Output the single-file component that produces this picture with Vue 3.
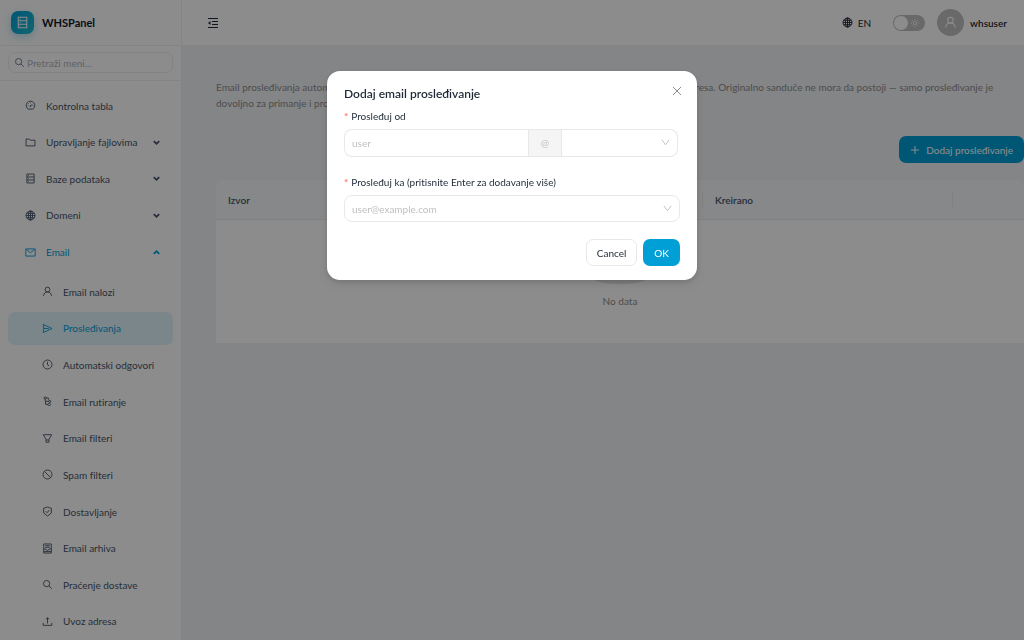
<script setup>
import { ref } from 'vue'

const search = ref('')
const dark = ref(false)
const source = ref('')
const domain = ref('')
const target = ref('')

const icons = {
  dashboard: '<path d="M300 846A400 400 0 1 1 724 846Z"/><path d="M512 570L650 410M512 240v60M260 520h60M704 520h60M330 330l40 40"/><circle cx="512" cy="570" r="40"/>',
  folder: '<path d="M96 190h300l110 110h422v530H96z"/>',
  database: '<path d="M176 96h672v832H176zM176 370h672M176 650h672"/><path d="M300 235h60M300 510h60M300 790h60"/>',
  globe: '<circle cx="512" cy="512" r="420"/><ellipse cx="512" cy="512" rx="190" ry="420"/><path d="M512 92v840M92 512h840M150 310h724M150 714h724"/>',
  mail: '<path d="M76 180h872v664H76z"/><path d="M130 230l382 300 382-300"/>',
  user: '<circle cx="512" cy="330" r="220"/><path d="M140 920c10-220 170-370 372-370s362 150 372 370"/>',
  send: '<path d="M110 130L930 512 110 894l60-382z"/><path d="M170 512h460"/>',
  clock: '<circle cx="512" cy="512" r="420"/><path d="M512 260v280l160 110"/>',
  route: '<circle cx="300" cy="190" r="110"/><path d="M410 190h190v150M300 300v190h330"/><path d="M330 490v290h200"/><circle cx="720" cy="500" r="100"/><rect x="530" y="700" width="260" height="180" rx="80"/>',
  filter: '<path d="M120 160h784L650 590v270H374V590z"/><path d="M374 650h276"/>',
  stop: '<circle cx="512" cy="512" r="420"/><path d="M220 220l584 584"/>',
  shield: '<path d="M512 90l360 120v440L512 930 152 650V210z"/><path d="M340 490l130 130 220-250"/>',
  archive: '<path d="M160 90h704v844H160z"/><path d="M300 250h424M300 400h424M160 560h200c20 180 284 180 304 0h200M160 800h704"/>',
  search: '<circle cx="430" cy="430" r="290"/><path d="M640 640l280 280"/>',
  upload: '<path d="M512 700V180M370 300l142-150 142 150M110 640v230h804V640"/>'
}

const menu = [
  { label: 'Kontrolna tabla', icon: 'dashboard' },
  { label: 'Upravljanje fajlovima', icon: 'folder', group: true },
  { label: 'Baze podataka', icon: 'database', group: true },
  { label: 'Domeni', icon: 'globe', group: true },
  {
    label: 'Email', icon: 'mail', group: true, open: true,
    children: [
      { label: 'Email nalozi', icon: 'user' },
      { label: 'Prosleđivanja', icon: 'send', active: true },
      { label: 'Automatski odgovori', icon: 'clock' },
      { label: 'Email rutiranje', icon: 'route' },
      { label: 'Email filteri', icon: 'filter' },
      { label: 'Spam filteri', icon: 'stop' },
      { label: 'Dostavljanje', icon: 'shield' },
      { label: 'Email arhiva', icon: 'archive' },
      { label: 'Praćenje dostave', icon: 'search' },
      { label: 'Uvoz adresa', icon: 'upload' }
    ]
  }
]
</script>

<template>
  <div class="app">
    <aside class="sidebar">
      <div class="brand">
        <span class="logo">
          <svg viewBox="0 0 1024 1024" class="icon" v-html="icons.database"></svg>
        </span>
        <strong>WHSPanel</strong>
      </div>
      <div class="search-area">
        <label class="search">
          <svg viewBox="0 0 1024 1024" class="icon" v-html="icons.search"></svg>
          <input v-model="search" type="text" placeholder="Pretraži meni..." aria-label="Pretraži meni" />
        </label>
      </div>
      <nav class="nav">
        <ul class="menu">
          <li v-for="item in menu" :key="item.label" class="entry">
            <button v-if="item.group" type="button" class="item" :class="{ open: item.open }" :aria-expanded="!!item.open">
              <svg viewBox="0 0 1024 1024" class="icon" v-html="icons[item.icon]"></svg>
              <span>{{ item.label }}</span>
              <svg viewBox="0 0 10 10" class="arrow"><path d="M2 3.5l3 3 3-3" /></svg>
            </button>
            <a v-else href="#" class="item">
              <svg viewBox="0 0 1024 1024" class="icon" v-html="icons[item.icon]"></svg>
              <span>{{ item.label }}</span>
            </a>
            <ul v-if="item.children" class="submenu">
              <li v-for="child in item.children" :key="child.label">
                <a href="#" class="item child" :class="{ active: child.active }">
                  <svg viewBox="0 0 1024 1024" class="icon" v-html="icons[child.icon]"></svg>
                  <span>{{ child.label }}</span>
                </a>
              </li>
            </ul>
          </li>
        </ul>
      </nav>
    </aside>

    <div class="page">
      <header class="topbar">
        <button type="button" class="plain fold" aria-label="Skupi meni">
          <svg viewBox="0 0 12 12"><path d="M1 1.5h10M5 4.5h6M5 7.5h6M1 10.5h10" /><path class="solid" d="M3.5 4v4L1 6z" /></svg>
        </button>
        <div class="tools">
          <button type="button" class="plain lang">
            <svg viewBox="0 0 1024 1024" class="icon" v-html="icons.globe"></svg>
            <span>EN</span>
          </button>
          <label class="switch">
            <input v-model="dark" type="checkbox" role="switch" aria-label="Tamna tema" />
            <svg viewBox="0 0 12 12"><circle cx="6" cy="6" r="2" /><path d="M6 1v1.5M6 9.5V11M1 6h1.500M9.500 6H11M2.500 2.500l1 1M8.500 8.500l1 1M9.500 2.500l-1 1M3.500 8.500l-1 1" /></svg>
          </label>
          <button type="button" class="plain account">
            <span class="avatar"><svg viewBox="0 0 1024 1024" class="icon" v-html="icons.user"></svg></span>
            <strong>whsuser</strong>
          </button>
        </div>
      </header>

      <main class="content">
        <p class="intro">
          Email prosleđivanja automatski šalju kopiju svih dolaznih email poruka na jednu ili više drugih spoljnih email adresa. Originalno sanduče ne mora da postoji — samo prosleđivanje je dovoljno za primanje i prosleđivanje poruka.
        </p>
        <div class="actions">
          <button type="button" class="primary add">
            <svg viewBox="0 0 10 10"><path d="M5 1v8M1 5h8" /></svg>
            <span>Dodaj prosleđivanje</span>
          </button>
        </div>
        <table class="grid">
          <thead>
            <tr>
              <th>Izvor</th>
              <th>Odredište</th>
              <th class="col-created">Kreirano</th>
              <th class="col-action"></th>
            </tr>
          </thead>
          <tbody>
            <tr>
              <td colspan="4">
                <svg class="empty" viewBox="0 0 64 41"><ellipse cx="32" cy="33" rx="32" ry="7" /><path d="M9 13h46v20a3 3 0 0 1-3 3H12a3 3 0 0 1-3-3z" /></svg>
                <p>No data</p>
              </td>
            </tr>
          </tbody>
        </table>
      </main>
    </div>

    <div class="mask">
      <form class="modal" role="dialog" aria-modal="true" aria-labelledby="dialog-title" @submit.prevent>
        <button type="button" class="plain close" aria-label="Close">
          <svg viewBox="0 0 10 10"><path d="M1 1l8 8M9 1L1 9" /></svg>
        </button>
        <h2 id="dialog-title">Dodaj email prosleđivanje</h2>
        <label class="caption" for="source"><i>*</i>Prosleđuj od</label>
        <div class="compound">
          <input id="source" v-model="source" type="text" placeholder="user" />
          <span class="at">@</span>
          <div class="select">
            <select v-model="domain" aria-label="Domen"><option value=""></option></select>
            <svg viewBox="0 0 10 10"><path d="M1 2l4 5.500L9 2" /></svg>
          </div>
        </div>
        <label class="caption" for="target"><i>*</i>Prosleđuj ka (pritisnite Enter za dodavanje više)</label>
        <div class="select full">
          <select id="target" v-model="target"><option value="" disabled>user@example.com</option></select>
          <svg viewBox="0 0 10 10"><path d="M1 2l4 5.500L9 2" /></svg>
        </div>
        <div class="footer">
          <button type="button" class="default">Cancel</button>
          <button type="submit" class="primary">OK</button>
        </div>
      </form>
    </div>
  </div>
</template>

<style>
body { overflow: hidden; }
</style>

<style scoped>
* { box-sizing: border-box; }

.app {
  display: flex;
  height: 100vh;
  background: #f0f2f5;
  color: #1f2937;
  font: 10px/16px Lato, "Noto Sans", sans-serif;
  font-variant-ligatures: none;
}

button, input, select { font: inherit; font-variant-ligatures: none; color: inherit; }
button { cursor: pointer; white-space: nowrap; }
ul { list-style: none; margin: 0; padding: 0; }
svg { fill: none; stroke: currentColor; flex: none; }
.icon { width: 11px; height: 11px; stroke-width: 84; }
.plain { border: 0; padding: 0; background: none; display: flex; align-items: center; }

.sidebar {
  width: 182px;
  flex: none;
  display: flex;
  flex-direction: column;
  background: #fff;
  border-right: 1px solid #f0f0f0;
}
.brand {
  height: 46px;
  flex: none;
  display: flex;
  align-items: center;
  gap: 8px;
  padding-left: 11px;
  border-bottom: 1px solid #f0f0f0;
  font-size: 11px;
  color: #0f172a;
}
.logo {
  display: flex;
  align-items: center;
  justify-content: center;
  width: 23px;
  height: 23px;
  border-radius: 7px;
  color: #fff;
  background: linear-gradient(135deg, #009fd6, #22b8cf);
  box-shadow: 0 3px 8px rgba(0, 159, 214, 0.3);
}
.logo .icon { width: 13px; height: 13px; }
.search-area { padding: 6px 8px 7px; border-bottom: 1px solid #f0f0f0; }
.search {
  display: flex;
  align-items: center;
  gap: 2px;
  height: 21px;
  padding: 0 5px;
  border: 1px solid #eceef0;
  border-radius: 7px;
  color: #64748b;
}
.search input { width: 100%; min-width: 0; padding: 0; border: 0; outline: 0; background: none; }
input::placeholder { color: #bfbfbf; opacity: 1; }
.search input::placeholder { color: #b0b4ba; }

.nav { flex: 1; min-height: 0; padding: 8px 8px 2px; }
.menu { height: 100%; display: flex; flex-direction: column; justify-content: space-between; }
.entry, .submenu { display: contents; }
.item {
  display: flex;
  align-items: center;
  gap: 10px;
  width: 100%;
  height: 33px;
  padding: 0 12px 0 17px;
  border: 0;
  border-radius: 7px;
  background: none;
  color: #475569;
  text-align: left;
  text-decoration: none;
  white-space: nowrap;
}
.item span { flex: 1; }
.item.open { color: #009fd6; }
.arrow { width: 9px; height: 9px; stroke-width: 2; }
.open .arrow { transform: rotate(180deg); }
.child { padding-left: 34px; }
.submenu li:first-child { margin-top: 3px; }
.item.active { background: #e0f4fb; color: #009fd6; }

.page { flex: 1; min-width: 0; }
.topbar {
  height: 45px;
  display: flex;
  align-items: center;
  justify-content: space-between;
  padding: 0 17px 0 25px;
  background: #fff;
}
.fold svg { width: 12px; height: 12px; stroke-width: 1; }
.fold .solid { fill: currentColor; stroke: none; }
.tools { display: flex; align-items: center; }
.lang { gap: 5px; margin-right: 22px; }
.switch {
  position: relative;
  display: flex;
  align-items: center;
  justify-content: flex-end;
  width: 32px;
  height: 16px;
  margin-right: 12px;
  padding-right: 5px;
  border-radius: 8px;
  background: #bfbfbf;
  color: #fff;
}
.switch input {
  position: absolute;
  left: 1px;
  top: 1px;
  width: 14px;
  height: 14px;
  margin: 0;
  appearance: none;
  border-radius: 50%;
  background: #fff;
}
.switch svg { width: 10px; height: 10px; stroke-width: 1; }
.account { gap: 6px; }
.account strong { font-weight: 600; }
.avatar {
  display: flex;
  align-items: center;
  justify-content: center;
  width: 27px;
  height: 27px;
  border-radius: 50%;
  background: #bfbfbf;
  color: #fff;
}
.avatar .icon { width: 13px; height: 13px; }

.content { padding: 34px 0 0 34px; }
.intro { margin: 0; color: #8c8c8c; }
.actions { display: flex; justify-content: flex-end; margin: 25px 0 17px; }
.primary {
  height: 27px;
  padding: 0 11px;
  border: 0;
  border-radius: 7px;
  background: #009fd6;
  color: #fff;
}
.add { display: flex; align-items: center; gap: 6px; }
.add svg { width: 10px; height: 10px; stroke-width: 1; }

.grid { width: 100%; table-layout: fixed; border-spacing: 0; background: #fff; border-radius: 8px 8px 0 0; }
th {
  position: relative;
  height: 40px;
  padding: 0 12px;
  background: #f5f7fa;
  border-bottom: 1px solid #eaecf0;
  color: #475569;
  font-weight: 600;
  text-align: left;
}
th:first-child { border-top-left-radius: 8px; }
th:last-child { border-top-right-radius: 8px; }
th:not(:last-child)::after {
  content: "";
  position: absolute;
  right: 0;
  top: 11px;
  width: 1px;
  height: 16px;
  background: #e8eaed;
}
.col-created { width: 250px; }
.col-action { width: 71px; }
td { height: 123px; padding: 0; vertical-align: top; text-align: center; color: #8c8c8c; }
td p { margin: 8px 0 0; }
.empty { display: block; width: 54px; height: 34px; margin: 31px auto 0; fill: #e4e4e4; stroke: none; }

.mask {
  position: fixed;
  inset: 0;
  display: flex;
  align-items: flex-start;
  justify-content: center;
  padding-top: 71px;
  background: rgba(0, 0, 0, 0.45);
}
.modal {
  position: relative;
  width: 370px;
  padding: 14px 17px;
  border-radius: 13px;
  background: #fff;
  box-shadow: 0 5px 13px rgba(0, 0, 0, 0.08), 0 2px 5px rgba(0, 0, 0, 0.12);
}
.close { position: absolute; right: 15px; top: 15px; color: #8c8c8c; }
.close svg { width: 10px; height: 10px; }
h2 { margin: 0 0 5px; font-size: 12px; line-height: 18px; font-weight: 600; }
.caption { display: block; line-height: 16px; margin-bottom: 5px; }
.caption i { margin-right: 3px; color: #ff7875; font-style: normal; font-weight: 700; }
.compound { display: flex; height: 28px; margin: 0 2px 17px 0; }
.compound input {
  flex: 1;
  min-width: 0;
  padding: 0 7px;
  border: 1px solid #e8e8e8;
  border-right: 0;
  border-radius: 8px 0 0 8px;
  outline: 0;
}
.at {
  width: 34px;
  border: 1px solid #e8e8e8;
  background: #f5f5f5;
  color: #bfbfbf;
  line-height: 26px;
  text-align: center;
}
.select { position: relative; width: 116px; height: 27px; }
.compound .select { height: 28px; }
.select select {
  width: 100%;
  height: 100%;
  padding: 0 24px 0 7px;
  appearance: none;
  border: 1px solid #e8e8e8;
  border-radius: 8px;
  background: #fff;
  color: #bfbfbf;
  opacity: 1;
}
.compound .select select { border-left: 0; border-radius: 0 8px 8px 0; }
.select.full { width: 100%; }
.select svg {
  position: absolute;
  right: 8px;
  top: 9px;
  width: 9px;
  height: 9px;
  color: #bfbfbf;
  pointer-events: none;
}
.footer { display: flex; justify-content: flex-end; gap: 6px; margin-top: 17px; }
.default {
  height: 27px;
  padding: 0 10px;
  border: 1px solid #e8e8e8;
  border-radius: 7px;
  background: #fff;
}
</style>
